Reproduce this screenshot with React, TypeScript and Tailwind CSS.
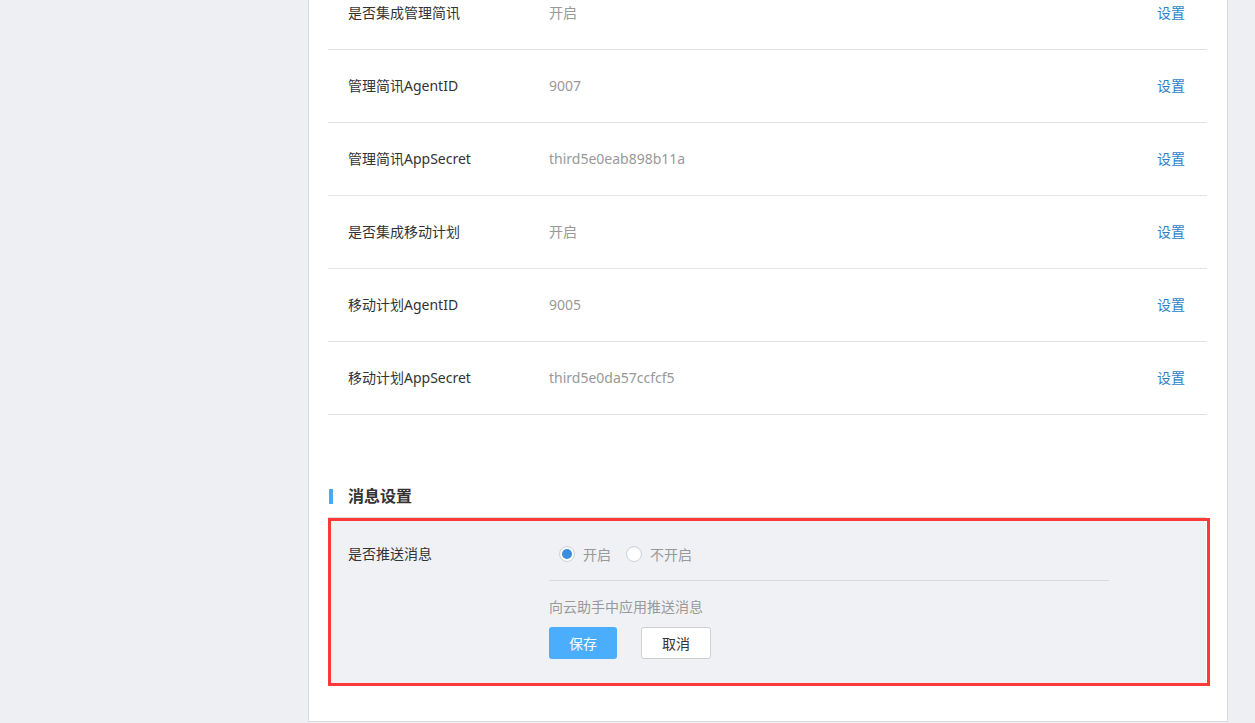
const rows = [
  { label: "是否集成管理简讯", value: "开启" },
  { label: "管理简讯AgentID", value: "9007" },
  { label: "管理简讯AppSecret", value: "third5e0eab898b11a" },
  { label: "是否集成移动计划", value: "开启" },
  { label: "移动计划AgentID", value: "9005" },
  { label: "移动计划AppSecret", value: "third5e0da57ccfcf5" },
];

const font = "font-['Noto_Sans','Noto_Sans_CJK_SC',sans-serif]";

function Radio({ checked, label }: { checked?: boolean; label: string }) {
  return (
    <label className="flex items-center gap-[8px] cursor-pointer">
      <span className="w-[16px] h-[16px] rounded-full border border-[#cfd2d6] bg-white flex items-center justify-center shadow-[inset_0_1px_2px_rgba(0,0,0,0.06)]">
        {checked && <span className="w-[10px] h-[10px] rounded-full bg-[#3a8ee0]" />}
      </span>
      <span className="text-[14px] text-[#999]">{label}</span>
    </label>
  );
}

export default function App() {
  return (
    <div className={`min-h-[723px] bg-[#eeeff2] overflow-hidden ${font}`}>
      <div className="ml-[308px] w-[920px] -mt-[23px] bg-white border border-t-0 border-[#dcdcdc] pl-[19px] pr-[20px] pb-[37px]">
        {/* Settings list */}
        <div>
          {rows.map((r) => (
            <div key={r.label} className="h-[73px] flex items-center border-b border-[#e2e2e2] pl-[20px] pr-[22px] pb-[2px] text-[14px]">
              <div className="w-[201px] text-[#333]">{r.label}</div>
              <div className="flex-1 text-[#999]">{r.value}</div>
              <a className="text-[#2f7fc8] cursor-pointer">设置</a>
            </div>
          ))}
        </div>

        {/* Message settings */}
        <div className="mt-[71px] mb-[11px] flex items-center h-[20px]">
          <span className="w-[4px] h-[15px] bg-[#4aa9f2] ml-[1px]" />
          <h3 className="ml-[15px] text-[16px] font-bold text-[#333] leading-[20px]">消息设置</h3>
        </div>

        <div className="relative mr-[1px] bg-[#f0f1f5] border-y border-[#dcdde0] pt-[26px] pb-[24px] pl-[20px]">
          <div className="flex">
            <div className="w-[201px] text-[14px] leading-[20px] text-[#333]">是否推送消息</div>
            <div className="w-[560px]">
              <div className="flex items-center gap-[15px] pl-[10px] h-[20px]">
                <Radio checked label="开启" />
                <Radio label="不开启" />
              </div>
              <div className="mt-[16px] border-t border-[#d9dadd]" />
              <p className="mt-[16px] text-[14px] leading-[20px] text-[#999]">向云助手中应用推送消息</p>
              <div className="mt-[10px] flex gap-[24px]">
                <button className="w-[68px] h-[32px] rounded-[3px] bg-[#4aaefc] text-white text-[14px]">保存</button>
                <button className="w-[70px] h-[32px] rounded-[3px] bg-white border border-[#cfcfcf] text-[#333] text-[14px]">取消</button>
              </div>
            </div>
          </div>
          {/* annotation box */}
          <div className="absolute left-0 top-0 -right-[4px] -bottom-[3px] border-[3px] border-[#fc3a3a] pointer-events-none" />
        </div>
      </div>
    </div>
  );
}
